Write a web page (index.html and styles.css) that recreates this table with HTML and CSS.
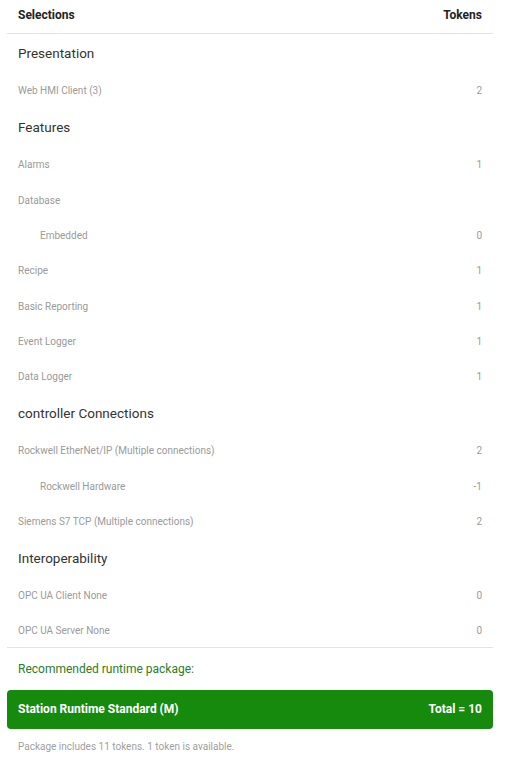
FILE: index.html
```html
<!DOCTYPE html>
<html>
	<head>
		<meta charset="utf-8" />
		<title>Selections</title>
		<link rel="stylesheet" href="styles.css">
	</head>
	<body>
		<div class="summary">
			<div class="head">
				<span>Selections</span>
				<span>Tokens</span>
			</div>
			<div class="section">Presentation</div>
			<div class="item"><span>Web HMI Client (3)</span><span>2</span></div>
			<div class="section">Features</div>
			<div class="item"><span>Alarms</span><span>1</span></div>
			<div class="item"><span>Database</span><span></span></div>
			<div class="item sub"><span>Embedded</span><span>0</span></div>
			<div class="item"><span>Recipe</span><span>1</span></div>
			<div class="item"><span>Basic Reporting</span><span>1</span></div>
			<div class="item"><span>Event Logger</span><span>1</span></div>
			<div class="item"><span>Data Logger</span><span>1</span></div>
			<div class="section">controller Connections</div>
			<div class="item"><span>Rockwell EtherNet/IP (Multiple connections)</span><span>2</span></div>
			<div class="item sub"><span>Rockwell Hardware</span><span>-1</span></div>
			<div class="item"><span>Siemens S7 TCP (Multiple connections)</span><span>2</span></div>
			<div class="section">Interoperability</div>
			<div class="item"><span>OPC UA Client None</span><span>0</span></div>
			<div class="item last"><span>OPC UA Server None</span><span>0</span></div>

			<div class="recommend">Recommended runtime package:</div>
			<div class="package">
				<span>Station Runtime Standard (M)</span>
				<span>Total = 10</span>
			</div>
			<div class="note">Package includes 11 tokens. 1 token is available.</div>
		</div>
	</body>
</html>
```

FILE: styles.css
```css
* {
	padding: 0;
	margin: 0;
	box-sizing: border-box;
}

body {
	background-color: #fff;
	font-family: Roboto, "Liberation Sans", sans-serif;
	color: #333;
}

.summary {
	width: 486px;
	margin-left: 7px;
}

.head {
	display: flex;
	justify-content: space-between;
	height: 34px;
	padding: 8px 11px 0 11px;
	border-bottom: 1px solid #e3e3e3;
	font-size: 12px;
	font-weight: bold;
	color: #222;
}

.section {
	height: 38.67px;
	padding: 11px 11px 0 11px;
	font-size: 13.5px;
	color: #333;
}

.item {
	display: flex;
	justify-content: space-between;
	align-items: center;
	height: 35.33px;
	padding: 1px 11px 0 11px;
	font-size: 10px;
	color: #9a9a9a;
}

.item.sub {
	padding-left: 33px;
}

.item.last {
	border-bottom: 1px solid #e3e3e3;
}

.recommend {
	padding: 14px 11px 0 11px;
	height: 42px;
	font-size: 12px;
	color: #2b7d27;
}

.package {
	display: flex;
	justify-content: space-between;
	align-items: center;
	height: 39px;
	padding: 0 11px;
	background-color: #168a0d;
	border-radius: 4px;
	color: #fff;
	font-size: 12px;
	font-weight: bold;
}

.note {
	padding: 12px 11px;
	font-size: 10px;
	color: #a0a0a0;
}
```
